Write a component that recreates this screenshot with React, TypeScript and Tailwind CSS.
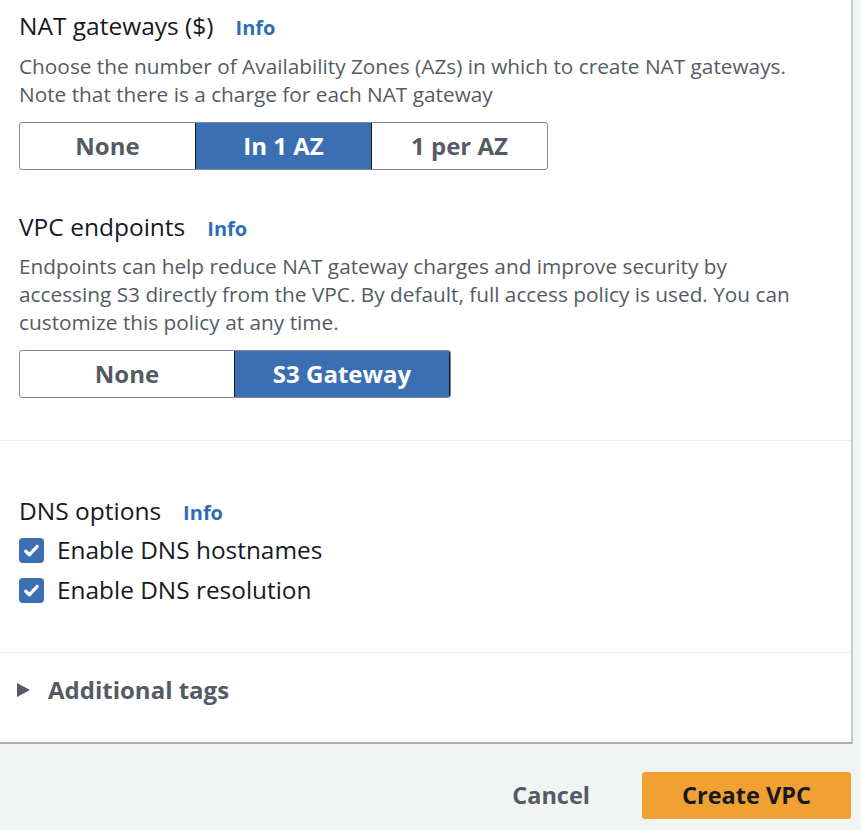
import React from 'react';

const font = { fontFamily: '"Open Sans", "Noto Sans", Arial, sans-serif' };

const Info = () => (
    <span className="ml-[22px] text-[20px] font-bold text-[#2f6eb5]">Info</span>
);

interface SegmentedProps {
    options: string[];
    selected: number;
    width: number;
}

const Segmented = ({ options, selected, width }: SegmentedProps) => (
    <div className="flex h-[48px] rounded-[3px] border border-[#7d8998] overflow-hidden" style={{ width }}>
        {options.map((opt, i) => (
            <div
                key={opt}
                className={`flex-1 flex items-center justify-center text-[24px] font-bold ${
                    i === selected ? 'bg-[#3a6fb4] text-white border-x border-[#16191f]' : 'text-[#545b64]'
                } ${i > 0 && i !== selected && i - 1 !== selected ? 'border-l border-[#7d8998]' : ''}`}
            >
                {opt}
            </div>
        ))}
    </div>
);

const Check = ({ label }: { label: string }) => (
    <div className="flex items-center h-[40px]">
        <div className="w-[25px] h-[25px] rounded-[4px] bg-[#3a6fb4] flex items-center justify-center">
            <svg width="19" height="19" viewBox="0 0 16 16" fill="none">
                <path d="M3.2 8.6l3 3L12.8 4.6" stroke="white" strokeWidth="2.8" strokeLinecap="round" strokeLinejoin="round" />
            </svg>
        </div>
        <span className="ml-[13px] text-[24.4px] text-[#16191f]">{label}</span>
    </div>
);

export default function App() {
    return (
        <div className="w-[861px] h-[830px] bg-[#f2f3f3] overflow-hidden" style={font}>
            <div className="w-[853px] h-[744px] bg-white border-r-[2px] border-[#c6cbce] border-b-[2px] border-b-[#a9afb3]">
                <div className="pl-[19px] pt-[12px]">
                    <div className="flex items-baseline h-[28px] leading-[28px]">
                        <span className="text-[24.5px] text-[#16191f]">NAT gateways ($)</span>
                        <Info />
                    </div>
                    <p className="mt-[12px] text-[20.8px] leading-[28px] text-[#545b64] whitespace-nowrap">
                        Choose the number of Availability Zones (AZs) in which to create NAT gateways.
                        <br />
                        Note that there is a charge for each NAT gateway
                    </p>
                    <div className="mt-[14px]">
                        <Segmented options={['None', 'In 1 AZ', '1 per AZ']} selected={1} width={529} />
                    </div>

                    <div className="flex items-baseline h-[28px] leading-[28px] mt-[43px]">
                        <span className="text-[24.5px] text-[#16191f]">VPC endpoints</span>
                        <Info />
                    </div>
                    <p className="mt-[11px] text-[20.8px] leading-[28px] text-[#545b64] whitespace-nowrap">
                        Endpoints can help reduce NAT gateway charges and improve security by
                        <br />
                        accessing S3 directly from the VPC. By default, full access policy is used. You can
                        <br />
                        customize this policy at any time.
                    </p>
                    <div className="mt-[14px]">
                        <Segmented options={['None', 'S3 Gateway']} selected={1} width={432} />
                    </div>
                </div>

                <div className="mt-[42px] border-t border-[#eaeded]" />

                <div className="pl-[19px] pt-[56px]">
                    <div className="flex items-baseline h-[28px] leading-[28px]">
                        <span className="text-[24.5px] text-[#16191f]">DNS options</span>
                        <Info />
                    </div>
                    <div className="mt-[5px]">
                        <Check label="Enable DNS hostnames" />
                        <Check label="Enable DNS resolution" />
                    </div>
                </div>

                <div className="mt-[42px] border-t border-[#eaeded]" />

                <div className="flex items-center pl-[16px] pt-[19px]">
                    <svg width="15" height="16" viewBox="0 0 15 16">
                        <path d="M1 1l13 7-13 7z" fill="#545b64" />
                    </svg>
                    <span className="ml-[17px] text-[24px] font-bold text-[#545b64]">Additional tags</span>
                </div>
            </div>

            <div className="flex items-center justify-end pr-[10px] mt-[28px]">
                <span className="text-[23.5px] font-bold text-[#545b64] mr-[52px]">Cancel</span>
                <div className="w-[209px] h-[47px] rounded-[3px] bg-[#f0a132] flex items-center justify-center text-[23.5px] font-bold text-[#16191f]">
                    Create VPC
                </div>
            </div>
        </div>
    );
}
